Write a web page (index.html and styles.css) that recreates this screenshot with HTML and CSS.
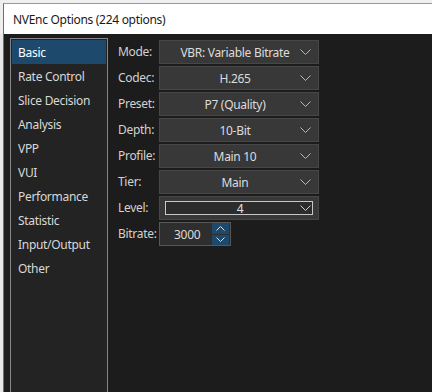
FILE: index.html
```html
<!DOCTYPE html>
<html>
<head>
<meta charset="utf-8">
<link rel="stylesheet" href="styles.css">
</head>
<body>
<div class="desk">
  <div class="strip"></div>
  <div class="window">
    <div class="titlebar">NVEnc Options (224 options)</div>
    <div class="client">
      <ul class="list">
        <li class="item selected">Basic</li>
        <li class="item">Rate Control</li>
        <li class="item">Slice Decision</li>
        <li class="item">Analysis</li>
        <li class="item">VPP</li>
        <li class="item">VUI</li>
        <li class="item">Performance</li>
        <li class="item">Statistic</li>
        <li class="item">Input/Output</li>
        <li class="item">Other</li>
      </ul>
      <div class="form">
        <div class="label">Mode:</div>
        <div class="combo"><span class="val">VBR: Variable Bitrate</span><svg class="chev" width="11" height="6" viewBox="0 0 11 6"><polyline points="0.5,0.5 5.5,5.5 10.5,0.5" fill="none" stroke="#b8b8b8" stroke-width="1"/></svg></div>
        <div class="label">Codec:</div>
        <div class="combo"><span class="val">H.265</span><svg class="chev" width="11" height="6" viewBox="0 0 11 6"><polyline points="0.5,0.5 5.5,5.5 10.5,0.5" fill="none" stroke="#b8b8b8" stroke-width="1"/></svg></div>
        <div class="label">Preset:</div>
        <div class="combo"><span class="val">P7 (Quality)</span><svg class="chev" width="11" height="6" viewBox="0 0 11 6"><polyline points="0.5,0.5 5.5,5.5 10.5,0.5" fill="none" stroke="#b8b8b8" stroke-width="1"/></svg></div>
        <div class="label">Depth:</div>
        <div class="combo"><span class="val">10-Bit</span><svg class="chev" width="11" height="6" viewBox="0 0 11 6"><polyline points="0.5,0.5 5.5,5.5 10.5,0.5" fill="none" stroke="#b8b8b8" stroke-width="1"/></svg></div>
        <div class="label">Profile:</div>
        <div class="combo"><span class="val">Main 10</span><svg class="chev" width="11" height="6" viewBox="0 0 11 6"><polyline points="0.5,0.5 5.5,5.5 10.5,0.5" fill="none" stroke="#b8b8b8" stroke-width="1"/></svg></div>
        <div class="label">Tier:</div>
        <div class="combo"><span class="val">Main</span><svg class="chev" width="11" height="6" viewBox="0 0 11 6"><polyline points="0.5,0.5 5.5,5.5 10.5,0.5" fill="none" stroke="#b8b8b8" stroke-width="1"/></svg></div>
        <div class="label">Level:</div>
        <div class="combo focused"><div class="inner"><span class="val">4</span><svg class="chev" width="11" height="6" viewBox="0 0 11 6"><polyline points="0.5,0.5 5.5,5.5 10.5,0.5" fill="none" stroke="#d0d0d0" stroke-width="1"/></svg></div></div>
        <div class="label">Bitrate:</div>
        <div class="spin">
          <span class="num">3000</span>
          <div class="btns">
            <div class="btn"><svg width="9" height="5" viewBox="0 0 9 5"><polyline points="0.5,4.5 4.5,0.5 8.5,4.5" fill="none" stroke="#e0e0e0" stroke-width="1"/></svg></div>
            <div class="btn"><svg width="9" height="5" viewBox="0 0 9 5"><polyline points="0.5,0.5 4.5,4.5 8.5,0.5" fill="none" stroke="#e0e0e0" stroke-width="1"/></svg></div>
          </div>
        </div>
      </div>
    </div>
  </div>
</div>
</body>
</html>
```
FILE: styles.css
```css
html, body {
  margin: 0;
  padding: 0;
  width: 432px;
  height: 392px;
  overflow: hidden;
  background: #efefef;
}
.desk {
  display: flex;
  height: 392px;
  font-family: "Noto Sans", "Open Sans", sans-serif;
  font-size: 12px;
  letter-spacing: -0.3px;
}
.strip {
  width: 3px;
  background: #e6e6e6;
  margin-top: 34px;
}
.window {
  flex: 1;
  display: flex;
  flex-direction: column;
  margin-top: 3px;
  border-left: 1px solid #6e6e6e;
  border-top: 1px solid #9a9a9a;
}
.titlebar {
  height: 30px;
  background: #ffffff;
  color: #1a1a1a;
  padding-left: 9px;
  line-height: 30px;
  box-sizing: border-box;
  padding-top: 1px;
}
.client {
  flex: 1;
  background: #1c1c1c;
  display: flex;
  padding: 4px 0 0 6px;
  min-height: 0;
}
.list {
  list-style: none;
  margin: 0;
  padding: 1px;
  width: 94px;
  border: 1px solid #85858a;
  border-bottom: none;
  background: #232323;
}
.item {
  height: 24px;
  line-height: 22px;
  padding-top: 2px;
  box-sizing: border-box;
  padding-left: 6px;
  color: #d8d8d8;
}
.item.selected {
  background: #1d4a6c;
  color: #ffffff;
}
.form {
  display: grid;
  grid-template-columns: 41px 160px;
  grid-auto-rows: 24px;
  row-gap: 2px;
  margin-left: 10px;
  padding-top: 2px;
  align-content: start;
}
.label {
  color: #d2d2d2;
  line-height: 24px;
}
.combo {
  position: relative;
  display: flex;
  align-items: center;
  background: #383838;
  border: 1px solid #474747;
  box-sizing: border-box;
  color: #dcdcdc;
}
.val {
  flex: 1;
  text-align: center;
  padding-left: 14px;
}
.chev {
  margin: 0 7px 0 4px;
}
.combo.focused {
  padding: 5px;
}
.inner {
  flex: 1;
  height: 12px;
  display: flex;
  align-items: center;
  border: 1px solid #c8c8c8;
  background: #2c2c2c;
  color: #e0e0e0;
}
.inner .val {
  padding-left: 18px;
}
.inner .chev {
  margin: 0 1px 0 4px;
}
.spin {
  width: 72px;
  display: flex;
  align-items: center;
  background: #2e2e2e;
  border: 1px solid #585858;
  box-sizing: border-box;
  color: #dcdcdc;
}
.num {
  flex: 1;
  padding-left: 14px;
}
.btns {
  display: flex;
  flex-direction: column;
  gap: 1px;
  width: 17px;
  height: 22px;
  margin-right: 1px;
}
.btn {
  flex: 1;
  background: #1d4a6c;
  display: flex;
  align-items: center;
  justify-content: center;
}
```
